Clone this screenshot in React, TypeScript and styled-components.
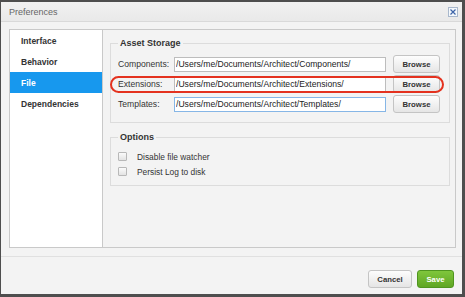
import React from 'react'
import styled, { createGlobalStyle } from 'styled-components'

const GlobalStyle = createGlobalStyle`
  html, body {
    margin: 0;
    padding: 0;
  }
  body {
    width: 465px;
    height: 297px;
    overflow: hidden;
    background: #4e4e4e;
    font-family: 'Liberation Sans', Arial, sans-serif;
  }
`

const Dialog = styled.div`
  box-sizing: border-box;
  margin: 2px 0 0 1px;
  width: 461px;
  height: 292px;
  background: #f3f3f3;
  display: flex;
  flex-direction: column;
`

const TitleBar = styled.div`
  box-sizing: border-box;
  height: 20px;
  display: flex;
  align-items: center;
  justify-content: space-between;
  padding: 0 4px 0 8px;
  background: linear-gradient(#f1f1f1, #e9e9e9);
  border-bottom: 1px solid #d9d9d9;
  color: #666;
  font-size: 9px;
`

const CloseButton = styled.div`
  box-sizing: border-box;
  width: 10px;
  height: 10px;
  margin-top: 1px;
  border: 1px solid #a9b8cc;
  background: #f4f8fc;
  display: flex;
  align-items: center;
  justify-content: center;
`

const Body = styled.div`
  box-sizing: border-box;
  height: 234px;
  padding: 7px 6px 8px 8px;
`

const Panel = styled.div`
  box-sizing: border-box;
  height: 219px;
  display: flex;
  border: 1px solid #c9c9c9;
`

const Sidebar = styled.div`
  width: 92px;
  background: #fff;
  border-right: 1px solid #c9c9c9;
`

const NavItem = styled.div<{ active?: boolean }>`
  height: 21px;
  display: flex;
  align-items: center;
  padding-left: 11px;
  font-size: 8.5px;
  font-weight: bold;
  color: ${({ active }) => (active ? '#fff' : '#333')};
  background: ${({ active }) => (active ? '#1798ee' : 'transparent')};
`

const Main = styled.div`
  flex: 1;
  padding: 6px 5px 0 7px;
`

const Fieldset = styled.fieldset<{ pad: string; gap?: number }>`
  margin: ${({ gap }) => gap || 0}px 0 0 0;
  padding: ${({ pad }) => pad};
  border: 1px solid #dcdcdc;
  min-width: 0;
`

const Legend = styled.legend`
  padding: 0 2px;
  line-height: 14px;
  font-size: 9px;
  font-weight: bold;
  color: #333;
`

const Row = styled.div`
  position: relative;
  height: 20px;
  display: flex;
  align-items: center;
`

const Label = styled.div`
  width: 56px;
  font-size: 8.6px;
  color: #333;
`

const PathInput = styled.input<{ focused?: boolean }>`
  box-sizing: border-box;
  width: 212px;
  height: 15px;
  margin: 0;
  padding: 0 1px;
  border: 1px solid ${({ focused }) => (focused ? '#86b6e6' : '#bdbdbd')};
  background: #fff;
  font-family: 'Liberation Sans', Arial, sans-serif;
  font-size: 8.6px;
  color: #222;
  outline: none;
`

const Button = styled.button<{ primary?: boolean; w: number }>`
  box-sizing: border-box;
  width: ${({ w }) => w}px;
  height: 18px;
  margin: 0;
  padding: 0;
  border: 1px solid ${({ primary }) => (primary ? '#4f951f' : '#c4c4c4')};
  border-radius: 3px;
  background: ${({ primary }) =>
    primary ? 'linear-gradient(#7fc63c, #5fa624)' : 'linear-gradient(#fdfdfd, #e5e5e5)'};
  font-family: 'Liberation Sans', Arial, sans-serif;
  font-size: 7.75px;
  font-weight: bold;
  color: ${({ primary }) => (primary ? '#fff' : '#333')};
`

const BrowseButton = styled(Button)`
  margin-left: 7px;
`

const Highlight = styled.div`
  position: absolute;
  left: -8px;
  top: 2px;
  width: 334px;
  height: 17px;
  box-sizing: border-box;
  border: 2px solid #e4321f;
  border-radius: 9px;
  pointer-events: none;
`

const CheckRow = styled.div`
  height: 15px;
  display: flex;
  align-items: center;
  font-size: 8.4px;
  color: #333;
`

const Checkbox = styled.span`
  box-sizing: border-box;
  width: 9px;
  height: 9px;
  margin-right: 10px;
  border: 1px solid #b8b8b8;
  border-radius: 1px;
  background: linear-gradient(#fbfbfb, #e3e3e3);
`

const Footer = styled.div`
  flex: 1;
  display: flex;
  justify-content: flex-end;
  align-items: flex-start;
  gap: 5px;
  padding: 13px 8px 0 0;
  border-top: 1px solid #e0e0e0;
`

const paths = [
  { label: 'Components:', value: '/Users/me/Documents/Architect/Components/' },
  { label: 'Extensions:', value: '/Users/me/Documents/Architect/Extensions/', marked: true },
  { label: 'Templates:', value: '/Users/me/Documents/Architect/Templates/', focused: true },
]

const App = () => {
  return (
    <>
      <GlobalStyle />
      <Dialog>
        <TitleBar>
          Preferences
          <CloseButton>
            <svg width="6" height="6" viewBox="0 0 6 6">
              <path d="M0.5 0.5 L5.5 5.5 M5.5 0.5 L0.5 5.5" stroke="#3d64a8" strokeWidth="1.2" />
            </svg>
          </CloseButton>
        </TitleBar>
        <Body>
          <Panel>
            <Sidebar>
              <NavItem>Interface</NavItem>
              <NavItem>Behavior</NavItem>
              <NavItem active>File</NavItem>
              <NavItem>Dependencies</NavItem>
            </Sidebar>
            <Main>
              <Fieldset pad="4px 7px 8px 7px">
                <Legend>Asset Storage</Legend>
                {paths.map((p) => (
                  <Row key={p.label}>
                    <Label>{p.label}</Label>
                    <PathInput readOnly value={p.value} focused={p.focused} />
                    <BrowseButton w={47}>Browse</BrowseButton>
                    {p.marked && <Highlight />}
                  </Row>
                ))}
              </Fieldset>
              <Fieldset pad="5px 7px 6px 7px" gap={7}>
                <Legend>Options</Legend>
                <CheckRow>
                  <Checkbox />
                  Disable file watcher
                </CheckRow>
                <CheckRow>
                  <Checkbox />
                  Persist Log to disk
                </CheckRow>
              </Fieldset>
            </Main>
          </Panel>
        </Body>
        <Footer>
          <Button w={44}>Cancel</Button>
          <Button primary w={37}>Save</Button>
        </Footer>
      </Dialog>
    </>
  )
}

export default App
